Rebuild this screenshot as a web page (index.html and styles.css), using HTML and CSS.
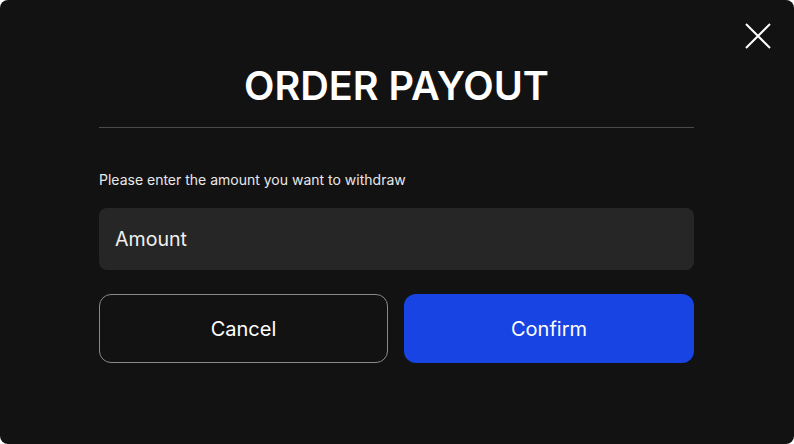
FILE: index.html
```html
<!DOCTYPE html>
<html>
<head>
<meta charset="utf-8">
<link rel="stylesheet" href="styles.css">
</head>
<body>
<div class="modal">
  <button class="close" aria-label="Close">
    <svg width="26" height="26" viewBox="0 0 26 26"><path d="M1 1L25 25M25 1L1 25" stroke="#fff" stroke-width="2" fill="none"/></svg>
  </button>
  <div class="content">
    <h1 class="title">ORDER PAYOUT</h1>
    <div class="divider"></div>
    <p class="label">Please enter the amount you want to withdraw</p>
    <div class="input">Amount</div>
    <div class="actions">
      <button class="btn btn-cancel">Cancel</button>
      <button class="btn btn-confirm">Confirm</button>
    </div>
  </div>
</div>
</body>
</html>
```
FILE: styles.css
```css
html, body { margin: 0; padding: 0; background: #fff; }
body { font-family: Inter, "Noto Sans", sans-serif; }
.modal {
  position: relative;
  width: 794px;
  height: 444px;
  background: #121212;
  border-radius: 8px;
  box-sizing: border-box;
  padding: 60px 100px 0 99px;
  color: #fff;
}
.close {
  position: absolute;
  top: 23px;
  right: 23px;
  width: 26px;
  height: 26px;
  padding: 0;
  border: 0;
  background: none;
  display: block;
}
.close svg { display: block; }
.content { display: flex; flex-direction: column; }
.title {
  margin: 0;
  text-align: center;
  font-size: 39.6px;
  line-height: 52px;
  font-weight: 600;
  letter-spacing: 0;
}
.divider { height: 1px; background: #4a4a4a; margin-top: 15px; }
.label {
  margin: 44px 0 0;
  font-size: 14px;
  line-height: 16px;
  color: #e8e8e8;
}
.input {
  margin-top: 20px;
  height: 62px;
  background: #262626;
  border-radius: 8px;
  box-sizing: border-box;
  padding: 0 16px;
  display: flex;
  align-items: center;
  font-size: 19.6px;
  color: #f0f0f0;
}
.actions { display: flex; gap: 16px; margin-top: 24px; }
.btn {
  height: 69px;
  border-radius: 12px;
  font-family: inherit;
  font-size: 20px;
  color: #fff;
  padding: 0;
  box-sizing: border-box;
}
.btn-cancel { width: 289px; background: #121212; border: 1px solid #8a8a8a; }
.btn-confirm { width: 290px; background: #1744e3; border: 0; }
```
